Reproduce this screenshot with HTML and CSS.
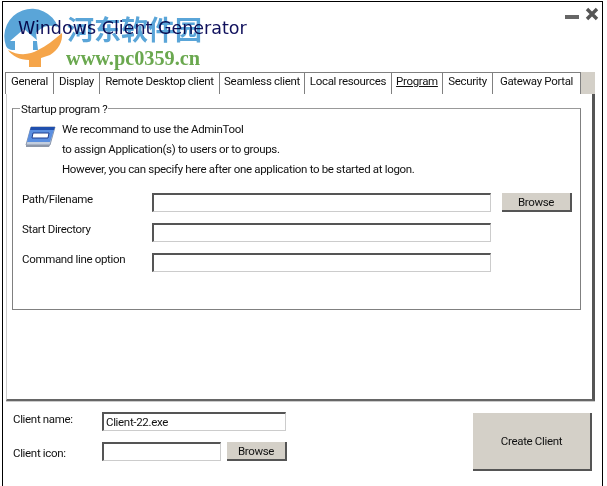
FILE: index.html
```html
<!DOCTYPE html>
<html lang="en">
<head>
    <meta charset="UTF-8">
    <meta name="viewport" content="width=device-width, initial-scale=1.0">
    <title>Windows Client Generator</title>
    <link rel="stylesheet" href="styles.css">
</head>
<body>
    <div class="window">
        <div class="titlebar">
            <h1>Windows Client Generator</h1>
            <div class="controls">
                <span class="minimize"></span>
                <svg class="close" width="14" height="14" viewBox="0 0 14 14">
                    <path d="M2 2 12 12M12 2 2 12" stroke="#555" stroke-width="3.4"/>
                </svg>
            </div>
        </div>

        <div class="tabs">
            <div class="tab">General</div>
            <div class="tab">Display</div>
            <div class="tab">Remote Desktop client</div>
            <div class="tab">Seamless client</div>
            <div class="tab">Local resources</div>
            <div class="tab active">Program</div>
            <div class="tab">Security</div>
            <div class="tab">Gateway Portal</div>
            <div class="tab-end"></div>
        </div>

        <div class="panel">
            <fieldset class="group">
                <legend>Startup program ?</legend>
                <div class="intro">
                    <svg class="intro-icon" width="32" height="22" viewBox="0 0 32 22">
                        <path d="M7 1H31L26 19H2Z" fill="#c3cede" stroke="#8a97ad"/>
                        <path d="M7 1H31L30 4H6Z" fill="#1f4fae"/>
                        <path d="M6 4H30L26 16H3Z" fill="#5b8fe0"/>
                        <path d="M9 7H25L24 12H8Z" fill="#fff" stroke="#1f3f90"/>
                        <path d="M2 19H26L25 21H2Z" fill="#8d97a8"/>
                    </svg>
                    <div class="intro-text">
                        <p>We recommand to use the AdminTool</p>
                        <p>to assign Application(s) to users or to groups.</p>
                        <p>However, you can specify here after one application to be started at logon.</p>
                    </div>
                </div>
                <div class="fields">
                    <label>Path/Filename</label>
                    <input type="text" class="field-input">
                    <button type="button" class="btn browse-wide">Browse</button>
                    <label>Start Directory</label>
                    <input type="text" class="field-input">
                    <span></span>
                    <label>Command line option</label>
                    <input type="text" class="field-input">
                </div>
            </fieldset>
        </div>

        <div class="footer">
            <div class="client-form">
                <label>Client name:</label>
                <input type="text" class="name-input" value="Client-22.exe">
                <label class="icon-label">Client icon:</label>
                <div class="icon-row">
                    <input type="text" class="icon-input">
                    <button type="button" class="btn browse-small">Browse</button>
                </div>
            </div>
            <button type="button" class="btn create">Create Client</button>
        </div>
    </div>

    <!-- site watermark stamped over the top left corner -->
    <div class="watermark">
        <svg class="wm-logo" width="70" height="70" viewBox="0 0 70 70">
            <path d="M6 46A27 27 0 0 1 58 27C48 24 42 27 36 33L38 50L14 50C9 50 7 48 6 46Z" fill="#5aa5d8"/>
            <path d="M24 29L38 41H33V53H15V41H10Z" fill="#fff"/>
            <path d="M8 50C18 56 30 55 38 50C46 46 54 40 62 33C63 42 58 50 50 55L41 58V67H29V60C20 60 12 56 8 50Z" fill="#f5a54a"/>
        </svg>
        <div class="wm-name">河东软件园</div>
        <div class="wm-url">www.pc0359.cn</div>
    </div>
</body>
</html>
```

FILE: styles.css
```css
body {
    margin: 0;
    height: 486px;
    overflow: hidden;
    background-color: white;
    font-family: Roboto, "Liberation Sans", sans-serif;
    font-size: 11.5px;
    letter-spacing: -0.33px;
    color: #111;
}

.window {
    position: relative;
    box-sizing: border-box;
    width: 601px;
    height: 485px;
    margin: 1px 0 0 2px;
    border: 1px solid black;
    border-bottom: none;
}

.titlebar {
    display: flex;
    justify-content: space-between;
    height: 70px;
    padding: 0 3px 0 15px;
}

h1 {
    margin: 14px 0 0;
    font-family: "DejaVu Sans", sans-serif;
    font-size: 17.5px;
    font-weight: normal;
    line-height: 24px;
    letter-spacing: 0;
    color: #10105c;
}

.controls {
    display: flex;
    align-items: flex-start;
    gap: 6px;
    padding-top: 5px;
}

.minimize {
    width: 14px;
    height: 4px;
    margin-top: 8px;
    background-color: #666;
}

.tabs {
    display: grid;
    grid-template-columns: 49px 46px 120px 85px 87px 51px 50px 88px 14px;
    height: 22px;
    margin-left: 2px;
}

.tab {
    box-sizing: border-box;
    padding-top: 1px;
    border-top: 1px solid #808080;
    border-right: 1px solid #808080;
    text-align: center;
    line-height: 14px;
}

.tab:first-child {
    border-left: 1px solid #808080;
}

.tab.active {
    text-decoration: underline;
}

.tab-end {
    background-color: #d4d0c8;
}

.panel {
    box-sizing: border-box;
    width: 589px;
    height: 307px;
    margin-left: 3px;
    padding: 6px 11px 0 5px;
    border-left: 1px solid #ccc;
    border-right: 3px solid #555;
    border-bottom: 2px solid #666;
    box-shadow: 0 1px 0 #ccc;
}

.group {
    box-sizing: border-box;
    height: 210px;
    margin: 0;
    padding: 0 9px;
    border: 1px solid #808080;
    border-top-color: #999;
}

legend {
    margin-left: -2px;
    padding: 2px 1px 0;
    line-height: 14px;
}

.intro {
    display: flex;
    margin-top: 3px;
}

.intro-icon {
    margin: 7px 6px 0 2px;
}

.intro-text p {
    margin: 0;
    line-height: 20px;
}

.fields {
    display: grid;
    grid-template-columns: 130px 339px 70px;
    grid-auto-rows: 19px;
    row-gap: 11px;
    margin-top: 14px;
}

.fields label {
    line-height: 13px;
}

input {
    box-sizing: border-box;
    margin: 0;
    padding: 0 2px;
    border: 1px solid #ccc;
    border-top: 2px solid #555;
    border-left: 2px solid #555;
    font: inherit;
    letter-spacing: inherit;
    color: #111;
    background-color: white;
}

.field-input {
    width: 339px;
    height: 19px;
}

.btn {
    box-sizing: border-box;
    margin: 0;
    padding: 0;
    border: none;
    border-right: 2px solid #555;
    border-bottom: 2px solid #555;
    background-color: #d4d0c8;
    font: inherit;
    letter-spacing: inherit;
    color: #111;
}

.browse-wide {
    width: 70px;
    height: 19px;
    margin-left: 11px;
}

.footer {
    display: flex;
    justify-content: space-between;
    padding: 11px 10px 0;
}

.client-form {
    display: grid;
    grid-template-columns: 89px auto;
    grid-auto-rows: 19px;
    row-gap: 11px;
}

.client-form label {
    line-height: 14px;
}

.client-form .icon-label {
    padding-top: 4px;
}

.name-input {
    width: 184px;
    height: 19px;
}

.icon-row {
    display: flex;
    gap: 6px;
}

.icon-input {
    width: 119px;
    height: 19px;
}

.browse-small {
    width: 60px;
    height: 19px;
}

.create {
    width: 119px;
    height: 58px;
    margin-top: 1px;
}

.watermark {
    position: absolute;
    left: 0;
    top: 0;
    mix-blend-mode: multiply;
    pointer-events: none;
}

.wm-logo {
    position: absolute;
    left: 0;
    top: 0;
}

.wm-name {
    position: absolute;
    left: 67px;
    top: 10px;
    width: 140px;
    font-family: "Noto Sans CJK SC", sans-serif;
    font-size: 27px;
    font-weight: bold;
    line-height: 38px;
    letter-spacing: 0;
    color: #5aa5d8;
}

.wm-url {
    position: absolute;
    left: 66px;
    top: 48px;
    font-family: "Liberation Serif", serif;
    font-size: 20.3px;
    font-weight: bold;
    line-height: 20px;
    letter-spacing: 0;
    color: #6aa84f;
}
```
